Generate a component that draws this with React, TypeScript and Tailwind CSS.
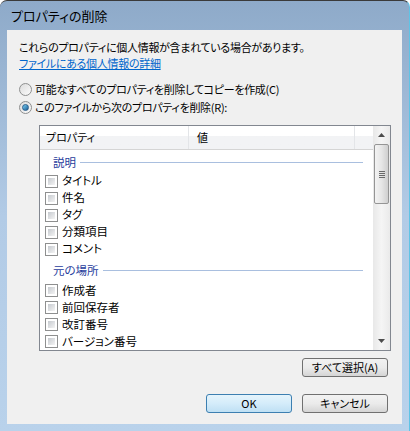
import React from "react";

const font = "[font-family:'Noto_Sans_CJK_JP','Noto_Sans',sans-serif]";

function Checkbox() {
  return (
    <div className="w-[13px] h-[13px] border border-[#8e8f8f] bg-white p-[2px] shrink-0">
      <div className="w-full h-full bg-gradient-to-br from-[#c6cacf] to-[#f4f4f4]" />
    </div>
  );
}

function Radio({ checked }: { checked?: boolean }) {
  return (
    <div className="w-[13px] h-[13px] rounded-full border border-[#8e8f8f] bg-gradient-to-br from-[#dcdcdc] to-[#fbfbfb] flex items-center justify-center shrink-0">
      {checked && (
        <div className="w-[7px] h-[7px] rounded-full bg-gradient-to-br from-[#7ad1f5] to-[#1b5c93] border border-[#2b5f8c]" />
      )}
    </div>
  );
}

function Item({ label }: { label: string }) {
  return (
    <div className="h-[17px] flex items-center pl-[5px] gap-[4px]">
      <Checkbox />
      <span className="text-[11.5px] leading-none text-black">{label}</span>
    </div>
  );
}

function Group({ label, className }: { label: string; className?: string }) {
  return (
    <div className={"h-[20px] flex items-center pl-[13px] pr-[10px] gap-[4px] " + (className ?? "")}>
      <span className="text-[11.5px] leading-none text-[#1f3c9c]">{label}</span>
      <div className="flex-1 h-px bg-[#a9bfdf]" />
    </div>
  );
}

function Button({ children, def }: { children: React.ReactNode; def?: boolean }) {
  return (
    <div
      className={
        "w-[86px] h-[19px] rounded-[3px] border flex items-center justify-center text-[11px] leading-none text-black " +
        (def
          ? "border-[#3c7fb1] bg-gradient-to-b from-[#e5f4fc] via-[#d4ecfa] to-[#bfe0f4]"
          : "border-[#707070] bg-gradient-to-b from-[#f2f2f2] via-[#ebebeb] to-[#d5d5d5]")
      }
    >
      {children}
    </div>
  );
}

export default function App() {
  return (
    <div className={"w-[410px] h-[431px] " + font + " [font-feature-settings:'palt']"}>
      <div className="w-full h-full rounded-t-[7px] border-t border-[#3a3a3a] bg-gradient-to-b from-[#8eaac9] via-[#b2cbe6] to-[#b9d2eb] flex flex-col border-r border-r-[#5fc4e6]">
        <div className="h-[29px] flex items-center pl-[11px] text-[13px] text-black leading-none">
          プロパティの削除
        </div>
        <div className="mx-[7px] h-[394px] bg-[#f0f0f0] flex flex-col text-[11px] text-black">
          <div className="pl-[12px] pt-[9px] tracking-[-0.3px]">
            <div className="h-[16px] flex items-center leading-none">
              これらのプロパティに個人情報が含まれている場合があります。
            </div>
            <div className="h-[16px] flex items-center leading-none">
              <span className="text-[#0066cc] underline">ファイルにある個人情報の詳細</span>
            </div>
          </div>
          <div className="pl-[12px] mt-[9px] tracking-[-0.3px]">
            <div className="h-[18px] flex items-center gap-[3px]">
              <Radio />
              <span className="leading-none">可能なすべてのプロパティを削除してコピーを作成(C)</span>
            </div>
            <div className="h-[18px] flex items-center gap-[3px]">
              <Radio checked />
              <span className="leading-none">このファイルから次のプロパティを削除(R):</span>
            </div>
          </div>
          <div className="ml-[32px] mt-[9px] w-[352px] h-[226px] border border-[#828790] bg-white flex">
            <div className="flex-1 flex flex-col overflow-hidden">
              <div className="h-[24px] flex border-b border-[#d5d5d5] bg-gradient-to-b from-white from-45% to-[#f2f3f5] to-45% shrink-0">
                <div className="w-[149px] border-r border-[#e3e5e8] flex items-center pl-[6px] leading-none">
                  プロパティ
                </div>
                <div className="w-[166px] border-r border-[#e3e5e8] flex items-center pl-[8px] leading-none">
                  値
                </div>
                <div className="flex-1" />
              </div>
              <Group label="説明" className="mt-[4px]" />
              <div className="mt-[2px]">
                <Item label="タイトル" />
                <Item label="件名" />
                <Item label="タグ" />
                <Item label="分類項目" />
                <Item label="コメント" />
              </div>
              <Group label="元の場所" className="mt-[5px]" />
              <div className="mt-[3px]">
                <Item label="作成者" />
                <Item label="前回保存者" />
                <Item label="改訂番号" />
                <Item label="バージョン番号" />
              </div>
            </div>
            <div className="w-[17px] bg-gradient-to-r from-[#e8e8e8] via-[#f5f5f5] to-[#eaeaea] flex flex-col">
              <div className="h-[18px] flex items-center justify-center">
                <svg width="7" height="4" viewBox="0 0 7 4">
                  <path d="M0 4 L3.5 0 L7 4 Z" fill="#4d4d4d" />
                </svg>
              </div>
              <div className="mx-[1px] h-[60px] rounded-[2px] border border-[#959595] bg-gradient-to-r from-[#f3f3f3] via-[#e6e6e6] to-[#cfcfcf] flex flex-col items-center justify-center gap-[1px]">
                <div className="w-[6px] h-px bg-[#6a6a6a]" />
                <div className="w-[6px] h-px bg-[#6a6a6a]" />
                <div className="w-[6px] h-px bg-[#6a6a6a]" />
                <div className="w-[6px] h-px bg-[#6a6a6a]" />
              </div>
              <div className="flex-1" />
              <div className="h-[18px] flex items-center justify-center">
                <svg width="7" height="4" viewBox="0 0 7 4">
                  <path d="M0 0 L3.5 4 L7 0 Z" fill="#4d4d4d" />
                </svg>
              </div>
            </div>
          </div>
          <div className="mt-[7px] flex justify-end pr-[14px]">
            <Button>すべて選択(A)</Button>
          </div>
          <div className="mt-[17px] flex justify-end pr-[14px] gap-[10px]">
            <Button def>OK</Button>
            <Button>キャンセル</Button>
          </div>
        </div>
      </div>
    </div>
  );
}
